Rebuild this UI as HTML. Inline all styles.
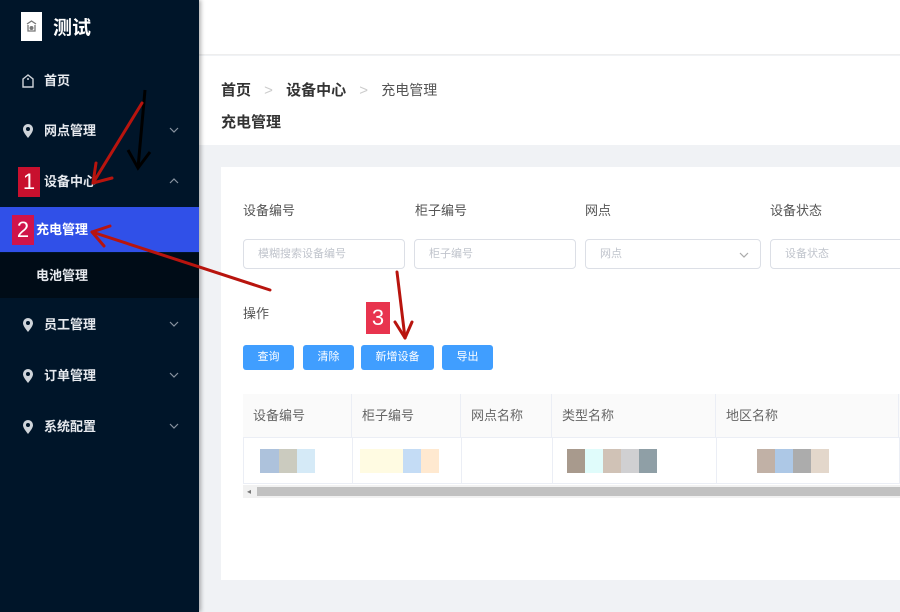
<!DOCTYPE html><html><head><meta charset="utf-8"><style>
*{margin:0;padding:0;box-sizing:border-box}
body{width:900px;height:612px;overflow:hidden;background:#f0f2f5;font-family:"Liberation Sans","Noto Sans CJK SC",sans-serif;position:relative;font-size:13px}
.a{position:absolute}
.sb{left:0;top:0;width:199px;height:612px;background:#001529;box-shadow:2px 0 4px rgba(0,0,0,.3)}
.mi{position:absolute;left:0;width:199px;height:46px;color:#e6e9ee;font-size:13px;line-height:46px;padding-left:44px;font-weight:bold}
.chev{position:absolute;right:20px;top:19px;width:10px;height:6px}
.ic{position:absolute;left:22px;top:16px;width:12px;height:14px}
.lbl{color:#555;font-size:13px}
.inp{height:30px;border:1px solid #dcdfe6;border-radius:4px;background:#fff;color:#c0c4cc;font-size:11px;line-height:28px;padding-left:14px}
.btn{height:25px;background:#409eff;color:#fff;font-size:11px;line-height:25px;text-align:center;border-radius:3px}
.th{top:394px;height:44px;line-height:44px;color:#666;font-size:13px;padding-left:10px;border-right:1px solid #ebeef5}
.blk{height:24px}
</style></head><body>
<div class="a" style="left:199px;top:0;width:701px;height:55px;background:#fff;border-bottom:1px solid #eee"></div>
<div class="a" style="left:199px;top:56px;width:701px;height:89px;background:#fff"></div>
<div class="a" style="left:221px;top:79px;font-size:15px;color:#333;font-weight:bold">首页 <span style="color:#ccc;font-weight:normal;margin:0 9px">&gt;</span> 设备中心 <span style="color:#ccc;font-weight:normal;margin:0 9px">&gt;</span> <span style="font-weight:normal;color:#555;font-size:14px">充电管理</span></div>
<div class="a" style="left:221px;top:111px;font-size:15px;color:#333;font-weight:bold">充电管理</div>
<div class="a" style="left:221px;top:167px;width:679px;height:413px;background:#fff"></div>
<div class="a lbl" style="left:243px;top:200px">设备编号</div>
<div class="a lbl" style="left:415px;top:200px">柜子编号</div>
<div class="a lbl" style="left:585px;top:200px">网点</div>
<div class="a lbl" style="left:770px;top:200px">设备状态</div>
<div class="a inp" style="left:243px;top:239px;width:162px">模糊搜索设备编号</div>
<div class="a inp" style="left:414px;top:239px;width:162px">柜子编号</div>
<div class="a inp" style="left:585px;top:239px;width:176px">网点<svg style="position:absolute;right:11px;top:12px" width="10" height="6" viewBox="0 0 10 6"><path d="M1 1 L5 5 L9 1" fill="none" stroke="#aaa" stroke-width="1.2"/></svg></div>
<div class="a inp" style="left:770px;top:239px;width:140px">设备状态</div>
<div class="a lbl" style="left:243px;top:303px">操作</div>
<div class="a btn" style="left:243px;top:345px;width:51px">查询</div>
<div class="a btn" style="left:303px;top:345px;width:51px">清除</div>
<div class="a btn" style="left:361px;top:345px;width:73px">新增设备</div>
<div class="a btn" style="left:442px;top:345px;width:51px">导出</div>
<div class="a" style="left:243px;top:394px;width:657px;height:90px;border:1px solid #ebeef5;background:#fff"></div>
<div class="a" style="left:243px;top:394px;width:657px;height:44px;background:#fafafa;border-bottom:1px solid #ebeef5"></div>
<div class="a th" style="left:243px;width:109px">设备编号</div>
<div class="a th" style="left:352px;width:109px">柜子编号</div>
<div class="a th" style="left:461px;width:91px">网点名称</div>
<div class="a th" style="left:552px;width:164px">类型名称</div>
<div class="a th" style="left:716px;width:183px">地区名称</div>
<div class="a" style="left:352px;top:438px;width:1px;height:46px;background:#ebeef5"></div>
<div class="a" style="left:461px;top:438px;width:1px;height:46px;background:#ebeef5"></div>
<div class="a" style="left:552px;top:438px;width:1px;height:46px;background:#ebeef5"></div>
<div class="a" style="left:716px;top:438px;width:1px;height:46px;background:#ebeef5"></div>
<div class="a" style="left:260px;top:449px;display:flex"><div class="blk" style="width:19px;background:#adc2dc"></div><div class="blk" style="width:18px;background:#cbcbbf"></div><div class="blk" style="width:18px;background:#d5eaf7"></div></div>
<div class="a" style="left:360px;top:449px;display:flex"><div class="blk" style="width:43px;background:#fffbe2"></div><div class="blk" style="width:18px;background:#c4dcf5"></div><div class="blk" style="width:18px;background:#ffe9d0"></div></div>
<div class="a" style="left:567px;top:449px;display:flex"><div class="blk" style="width:18px;background:#a89a8d"></div><div class="blk" style="width:18px;background:#e0fcfb"></div><div class="blk" style="width:18px;background:#d0c2b6"></div><div class="blk" style="width:18px;background:#d0d0d2"></div><div class="blk" style="width:18px;background:#8f9fa6"></div></div>
<div class="a" style="left:757px;top:449px;display:flex"><div class="blk" style="width:18px;background:#c1b1a6"></div><div class="blk" style="width:18px;background:#adc8e6"></div><div class="blk" style="width:18px;background:#acacac"></div><div class="blk" style="width:18px;background:#e3d7cb"></div></div>
<div class="a" style="left:243px;top:485px;width:657px;height:13px;background:#f1f1f1"></div>
<div class="a" style="left:257px;top:487px;width:643px;height:9px;background:#c1c1c1"></div>
<div class="a" style="left:247px;top:487px;font-size:8px;color:#777">◂</div>

<div class="a sb">
<div class="a" style="left:21px;top:12px;width:21px;height:29px;background:#fff"><svg width="21" height="29" viewBox="0 0 21 29"><path d="M6 12 L10.5 9 L15 12 M7 13 V19 H14 V13" fill="none" stroke="#777" stroke-width="1.3"/><circle cx="10.5" cy="16" r="2" fill="#777"/></svg></div>
<div class="a" style="left:53px;top:13px;color:#fff;font-size:19px;font-weight:bold">测试</div>
<div class="mi" style="top:58px"><svg class="ic" viewBox="0 0 12 14"><path d="M1 5 L6 1 L11 5 V13 H1Z" fill="none" stroke="#cfd4da" stroke-width="1.4"/><circle cx="6" cy="5" r="1" fill="#cfd4da"/></svg>首页</div>
<div class="mi" style="top:108px"><svg class="ic" viewBox="0 0 12 14"><path d="M6 14 C2 9 1 7 1 5 A5 5 0 0 1 11 5 C11 7 10 9 6 14Z" fill="#cfd4da"/><circle cx="6" cy="5" r="2" fill="#001529"/></svg>网点管理<svg class="chev" viewBox="0 0 10 6"><path d="M1 1 L5 5 L9 1" fill="none" stroke="#8893a0" stroke-width="1.2"/></svg></div>
<div class="mi" style="top:159px">设备中心<svg class="chev" viewBox="0 0 10 6"><path d="M1 5 L5 1 L9 5" fill="none" stroke="#8893a0" stroke-width="1.2"/></svg></div>
<div class="mi" style="top:207px;background:#3050e8;color:#fff;padding-left:36px;height:45px;line-height:45px">充电管理</div>
<div class="mi" style="top:253px;background:#000c17;padding-left:36px;height:45px;line-height:45px">电池管理</div>
<div class="mi" style="top:302px"><svg class="ic" viewBox="0 0 12 14"><path d="M6 14 C2 9 1 7 1 5 A5 5 0 0 1 11 5 C11 7 10 9 6 14Z" fill="#cfd4da"/><circle cx="6" cy="5" r="2" fill="#001529"/></svg>员工管理<svg class="chev" viewBox="0 0 10 6"><path d="M1 1 L5 5 L9 1" fill="none" stroke="#8893a0" stroke-width="1.2"/></svg></div>
<div class="mi" style="top:353px"><svg class="ic" viewBox="0 0 12 14"><path d="M6 14 C2 9 1 7 1 5 A5 5 0 0 1 11 5 C11 7 10 9 6 14Z" fill="#cfd4da"/><circle cx="6" cy="5" r="2" fill="#001529"/></svg>订单管理<svg class="chev" viewBox="0 0 10 6"><path d="M1 1 L5 5 L9 1" fill="none" stroke="#8893a0" stroke-width="1.2"/></svg></div>
<div class="mi" style="top:404px"><svg class="ic" viewBox="0 0 12 14"><path d="M6 14 C2 9 1 7 1 5 A5 5 0 0 1 11 5 C11 7 10 9 6 14Z" fill="#cfd4da"/><circle cx="6" cy="5" r="2" fill="#001529"/></svg>系统配置<svg class="chev" viewBox="0 0 10 6"><path d="M1 1 L5 5 L9 1" fill="none" stroke="#8893a0" stroke-width="1.2"/></svg></div>
</div>
<div class="a" style="left:18px;top:167px;width:22px;height:30px;background:#c8102e;color:#fff;font-size:22px;text-align:center;line-height:30px">1</div>
<div class="a" style="left:12px;top:215px;width:22px;height:30px;background:#d0144a;color:#fff;font-size:22px;text-align:center;line-height:30px">2</div>
<div class="a" style="left:366px;top:302px;width:24px;height:32px;background:#e8344e;color:#fff;font-size:22px;text-align:center;line-height:32px">3</div>
<svg class="a" style="left:0;top:0" width="900" height="612">
<g stroke="#000" stroke-width="3" fill="none"><path d="M145 90 L138 168"/><path d="M128 150 L138 168 L150 152"/></g>
<g stroke="#b8140e" stroke-width="3" fill="none" stroke-linecap="round">
<path d="M142 103 L93 183"/><path d="M93 183 L112 178 M93 183 L96 163"/>
<path d="M270 290 L92 232"/><path d="M92 232 L110 226 M92 232 L104 246"/>
<path d="M397 272 L405 338"/><path d="M405 338 L395 322 M405 338 L412 322"/>
</g></svg>
</body></html>
